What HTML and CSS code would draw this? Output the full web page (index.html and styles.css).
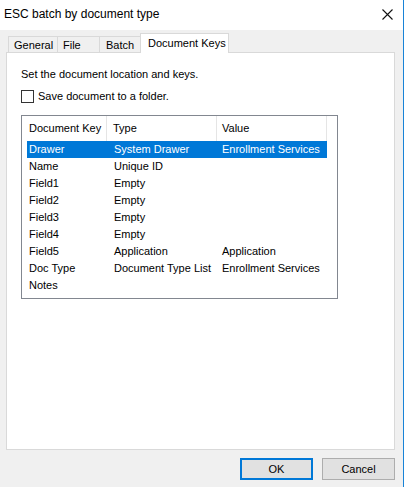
FILE: index.html
```html
<!DOCTYPE html>
<html lang="en">
<head>
    <meta charset="UTF-8">
    <title>ESC batch by document type</title>
    <link rel="stylesheet" href="styles.css">
</head>
<body>
    <div class="window">
        <!-- Title bar -->
        <div class="titlebar">
            <span class="title">ESC batch by document type</span>
            <svg class="close" viewBox="0 0 11 11" width="11" height="11">
                <path d="M0.5 0.5 L10.5 10.5 M10.5 0.5 L0.5 10.5" stroke="#111" stroke-width="1.1" fill="none"/>
            </svg>
        </div>

        <!-- Tabs -->
        <div class="tabs">
            <div class="tab general">General</div>
            <div class="tab file">File</div>
            <div class="tab batch">Batch</div>
            <div class="tab keys active">Document Keys</div>
        </div>

        <!-- Tab page -->
        <div class="page">
            <p class="hint">Set the document location and keys.</p>
            <label class="check"><span class="box"></span>Save document to a folder.</label>

            <div class="list">
                <div class="head">
                    <div class="col c1">Document Key</div>
                    <div class="col c2">Type</div>
                    <div class="col c3">Value</div>
                    <div class="col c4"></div>
                </div>
                <div class="rows">
                    <div class="row selected"><span class="c1">Drawer</span><span class="c2">System Drawer</span><span class="c3">Enrollment Services</span></div>
                    <div class="row"><span class="c1">Name</span><span class="c2">Unique ID</span><span class="c3"></span></div>
                    <div class="row"><span class="c1">Field1</span><span class="c2">Empty</span><span class="c3"></span></div>
                    <div class="row"><span class="c1">Field2</span><span class="c2">Empty</span><span class="c3"></span></div>
                    <div class="row"><span class="c1">Field3</span><span class="c2">Empty</span><span class="c3"></span></div>
                    <div class="row"><span class="c1">Field4</span><span class="c2">Empty</span><span class="c3"></span></div>
                    <div class="row"><span class="c1">Field5</span><span class="c2">Application</span><span class="c3">Application</span></div>
                    <div class="row"><span class="c1">Doc Type</span><span class="c2">Document Type List</span><span class="c3">Enrollment Services</span></div>
                    <div class="row"><span class="c1">Notes</span><span class="c2"></span><span class="c3"></span></div>
                </div>
            </div>
        </div>

        <!-- Buttons -->
        <div class="buttons">
            <button class="btn default">OK</button>
            <button class="btn">Cancel</button>
        </div>
    </div>
</body>
</html>
```

FILE: styles.css
```css
/* Dialog window */
body {
    margin: 0;
    background-color: #f0f0f0;
    font-family: "Liberation Sans", Arial, sans-serif;
    font-size: 11px;
    color: #000;
    white-space: nowrap;
}

.window {
    width: 404px;
    height: 487px;
    box-sizing: border-box;
    border-right: 1px solid #1883d7;
    background-color: #f0f0f0;
    display: flex;
    flex-direction: column;
}

/* Title bar */
.titlebar {
    height: 30px;
    background-color: #fff;
    display: flex;
    align-items: center;
    justify-content: space-between;
    padding: 0 10px 0 4px;
    flex-shrink: 0;
}
.title {
    font-size: 12px;
    margin-top: -3px;
}
.close {
    margin-top: -1px;
}

/* Tabs */
.tabs {
    display: flex;
    align-items: flex-end;
    height: 19px;
    margin-top: 3px;
    padding-left: 8px;
}
.tab {
    height: 16px;
    line-height: 16px;
    box-sizing: border-box;
    border: 1px solid #d9d9d9;
    border-bottom: none;
    border-right: none;
    background-color: #f0f0f0;
}
.tab.general { width: 49px; padding-left: 5px; }
.tab.file { width: 42px; padding-left: 5px; }
.tab.batch { width: 41px; padding-left: 6px; }
.tab.keys { width: 89px; padding-left: 7px; }
.tab.active {
    height: 20px;
    line-height: 18px;
    background-color: #fff;
    border-right: 1px solid #d9d9d9;
    margin-bottom: -1px;
    position: relative;
}

/* Tab page */
.page {
    width: 389px;
    height: 398px;
    box-sizing: border-box;
    margin-left: 6px;
    background-color: #fff;
    border: 1px solid #d9d9d9;
    padding: 14px 0 0 14px;
}
.hint {
    margin: 0;
    line-height: 14px;
}
.check {
    display: flex;
    align-items: center;
    margin-top: 8px;
    line-height: 14px;
}
.box {
    width: 11px;
    height: 11px;
    border: 1px solid #333;
    margin-right: 4px;
}

/* List view */
.list {
    width: 317px;
    height: 184px;
    box-sizing: border-box;
    margin-top: 12px;
    border: 1px solid #828790;
}
.head {
    display: flex;
    height: 25px;
}
.col {
    line-height: 25px;
    border-right: 1px solid #e5e5e5;
    box-sizing: border-box;
}
.head .c1 { width: 85px; padding-left: 7px; }
.head .c2 { width: 110px; padding-left: 6px; }
.head .c3 { width: 110px; padding-left: 5px; }
.head .c4 { flex: 1; border-right: none; }

.rows {
    padding-left: 5px;
}
.row {
    display: flex;
    width: 300px;
    height: 17px;
    line-height: 17px;
}
.row .c1 { width: 85px; padding-left: 2px; }
.row .c2 { width: 108px; }
.row .c3 { flex: 1; }
.row.selected {
    background-color: #0078d7;
    color: #fff;
}

/* Footer buttons */
.buttons {
    display: flex;
    justify-content: flex-end;
    gap: 9px;
    margin-top: 8px;
    padding-right: 8px;
}
.btn {
    width: 73px;
    height: 22px;
    box-sizing: border-box;
    background-color: #e1e1e1;
    border: 1px solid #adadad;
    font-family: inherit;
    font-size: 11px;
    color: #000;
    padding: 0;
}
.btn.default {
    border: 2px solid #0078d7;
}
```
